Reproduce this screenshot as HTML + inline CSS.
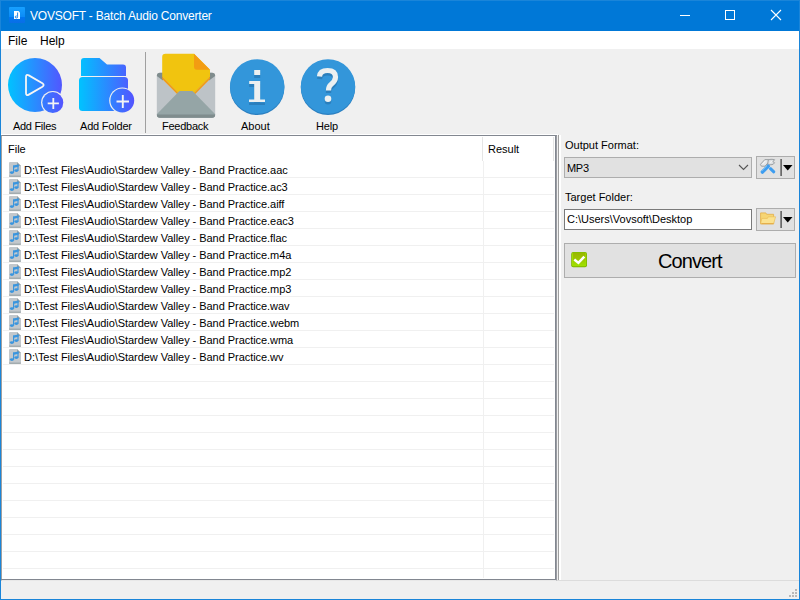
<!DOCTYPE html>
<html><head><meta charset="utf-8">
<style>
*{margin:0;padding:0;box-sizing:border-box}
html,body{width:800px;height:600px;overflow:hidden;background:#f0f0f0}
body{position:relative;font-family:"Liberation Sans",sans-serif;font-size:11px;line-height:12px;color:#000}
.a{position:absolute}
.t{position:absolute;white-space:pre;line-height:12px;font-size:11px}
</style></head><body>
<svg width="0" height="0" style="position:absolute">
<defs>
<linearGradient id="gb" x1="0" y1="0" x2="1" y2="0"><stop offset="0" stop-color="#00c3ff"/><stop offset="1" stop-color="#5552ff"/></linearGradient>
<linearGradient id="gb2" gradientUnits="userSpaceOnUse" x1="8" y1="0" x2="64" y2="0"><stop offset="0" stop-color="#00c3ff"/><stop offset="1" stop-color="#5552ff"/></linearGradient>
<linearGradient id="gf" gradientUnits="userSpaceOnUse" x1="79" y1="0" x2="135" y2="0"><stop offset="0" stop-color="#00c3ff"/><stop offset="1" stop-color="#5552ff"/></linearGradient>

</defs></svg>
<!-- title bar -->
<div class="a" style="left:0;top:0;width:800px;height:31px;background:#0078d7"></div>
<div class="a" style="left:0;top:0;width:800px;height:1px;background:#1a85d9"></div>
<!-- app icon -->
<div class="a" style="left:9px;top:7px;width:16px;height:16px;background:linear-gradient(#17a0ff,#0c8cf7 60%,#0077f0 62%,#0a6ee6);border-radius:1px"></div>
<svg class="a" style="left:13px;top:10px" width="8" height="10" viewBox="0 0 8 10"><path d="M1 1H5.5L7 2.5V9H1Z" fill="#fff"/><path d="M4.6 2.5V6.8A1.2 1 0 1 1 3.8 6" fill="none" stroke="#0a78e6" stroke-width="0.9"/></svg>
<div class="t" style="left:30px;top:10px;font-size:12px;color:#fff;letter-spacing:-0.2px">VOVSOFT - Batch Audio Converter</div>
<!-- caption buttons -->
<div class="a" style="left:680px;top:15px;width:10px;height:1px;background:#fff"></div>
<div class="a" style="left:725px;top:10px;width:10px;height:10px;border:1px solid #fff"></div>
<svg class="a" style="left:770px;top:9px" width="12" height="12" viewBox="0 0 12 12"><path d="M1 1L11 11M11 1L1 11" stroke="#fff" stroke-width="1.1"/></svg>

<!-- menu bar -->
<div class="a" style="left:1px;top:31px;width:798px;height:18px;background:#fff"></div>
<div class="t" style="left:8px;top:35px;font-size:12px">File</div>
<div class="t" style="left:40px;top:35px;font-size:12px">Help</div>

<!-- toolbar -->
<svg class="a" style="left:0;top:49px" width="400" height="86" viewBox="0 49 400 86">
 <!-- add files -->
 <circle cx="35" cy="85" r="27" fill="url(#gb2)"/>
 <path d="M26 77Q26 73.8 28.8 75.4L42.4 83.3Q44.9 85 42.4 86.7L28.8 94.6Q26 96.2 26 93Z" fill="none" stroke="#f6f6f6" stroke-width="1.8" stroke-linejoin="round"/>
 <circle cx="52.8" cy="102.6" r="11.7" fill="#f0f0f0"/>
 <circle cx="52.8" cy="102.6" r="10.5" fill="url(#gb2)"/>
 <path d="M47.7 103.4H58.9M53.3 98V108.9" stroke="#f4f4f4" stroke-width="1.8"/>
 <!-- add folder -->
 <path d="M84 58H99.5L107 64.5H123Q126 64.5 126 67.5V76H81V61Q81 58 84 58Z" fill="url(#gf)"/>
 <rect x="79" y="77" width="49" height="34" rx="3.5" fill="url(#gf)"/>
 <circle cx="122.3" cy="100.5" r="13.1" fill="#f0f0f0"/>
 <circle cx="122.3" cy="100.5" r="11.9" fill="url(#gf)"/>
 <path d="M116.5 101.5H129M122.8 94.9V108" stroke="#f4f4f4" stroke-width="1.9"/>
 <!-- separator -->
 <rect x="145" y="52" width="1" height="81" fill="#a0a0a0"/>
 <!-- feedback -->
 <path d="M160 72.8H212Q215.2 72.8 215.2 76V114.5Q215.2 117.7 212 117.7H160Q156.8 117.7 156.8 114.5V76Q156.8 72.8 160 72.8Z" fill="#bdc3c7"/>
 <path d="M156.8 76Q157 72.8 160 72.8H163V80.5Z" fill="#7f8c8d"/>
 <path d="M215.2 76Q215 72.8 212 72.8H209V80.5Z" fill="#7f8c8d"/>
 <path d="M165.5 53.8H194L210 69.8V76.5L193.7 93.2H178.6L162.2 76.5V57Q162.2 53.8 165.5 53.8Z" fill="#f1c40f"/>
 <path d="M194 53.8L210 69.8H197Q194 69.8 194 66.8Z" fill="#f39c12"/>
 <path d="M162.2 76.5L178.6 93.2H193.7L210 76.5V79L193.7 95.5H178.6L162.2 79Z" fill="#f39c12"/>
 <path d="M156.8 76L186 103L215.2 76" fill="none"/>
 <path d="M157 114L179.5 91H192.5L215 114V114.5Q215 117.7 212 117.7H160Q157 117.7 157 114.5Z" fill="#95a5a6"/>
 <path d="M156.8 114.6H215.2V114.6Q215.2 117.8 212 117.8H160Q156.8 117.8 156.8 114.6Z" fill="#7f8c8d"/>
 <!-- about -->
 <circle cx="257.2" cy="87.8" r="27.2" fill="#2a7fc0"/>
 <circle cx="257.2" cy="86.5" r="27.2" fill="#3396da"/>
 <rect x="254.2" y="73" width="6" height="5" fill="#2a7fbd"/>
 <rect x="254.2" y="70" width="6" height="5" fill="#ecf0f1"/>
 <path d="M249.2 84H260.2V102.6H265V105H249V102.6H254.2V87H249.2Z" fill="#2a7fbd"/>
 <path d="M249.2 81H260.2V99.6H265V102H249V99.6H254.2V84H249.2Z" fill="#ecf0f1"/>
 <!-- help -->
 <circle cx="328" cy="87.8" r="27.2" fill="#2a7fc0"/>
 <circle cx="328" cy="86.5" r="27.2" fill="#3396da"/>
 <path d="M319.5 79Q320 73 327.5 73Q335.5 73 335.5 79.5Q335.5 83.5 331 87Q328.5 89 328.5 93" fill="none" stroke="#2a7fbd" stroke-width="5.2" stroke-linecap="butt"/>
 <circle cx="328" cy="101.3" r="3.3" fill="#2a7fbd"/>
 <path d="M319.5 76.5Q320 70.5 327.5 70.5Q335.5 70.5 335.5 77Q335.5 81 331 84.5Q328.5 86.5 328.5 90.5" fill="none" stroke="#ecf0f1" stroke-width="5.2" stroke-linecap="butt"/>
 <circle cx="328" cy="98.8" r="3.3" fill="#ecf0f1"/>
</svg>
<div class="t" style="left:13px;top:120px;letter-spacing:-0.3px">Add Files</div>
<div class="t" style="left:80px;top:120px;letter-spacing:-0.2px">Add Folder</div>
<div class="t" style="left:162px;top:120px;letter-spacing:-0.25px">Feedback</div>
<div class="t" style="left:241px;top:120px">About</div>
<div class="t" style="left:316px;top:120px;letter-spacing:-0.2px">Help</div>

<!-- highlight under toolbar -->
<div class="a" style="left:1px;top:134px;width:557px;height:1px;background:#fff"></div>

<!-- listview -->
<div class="a" style="left:1px;top:135px;width:556px;height:446px;background:#fff;border-top:1px solid #828790;border-left:1px solid #a0a0a0;border-right:1px solid #9a9ca2;border-bottom:1px solid #e8e8e8"></div>
<div class="a" style="left:555px;top:135px;width:1px;height:445px;background:#828790"></div>
<div class="a" style="left:1px;top:579px;width:555px;height:1px;background:#828790"></div>
<div class="t" style="left:8px;top:143px">File</div>
<div class="t" style="left:488px;top:143px">Result</div>
<div class="a" style="left:482px;top:137px;width:1px;height:24px;background:#e5e5e5"></div>
<div class="a" style="left:553px;top:137px;width:1px;height:24px;background:#e5e5e5"></div>
<div class="a" style="left:3px;top:177px;width:551px;height:1px;background:#f0f0f0"></div>
<div class="a" style="left:3px;top:194px;width:551px;height:1px;background:#f0f0f0"></div>
<div class="a" style="left:3px;top:211px;width:551px;height:1px;background:#f0f0f0"></div>
<div class="a" style="left:3px;top:228px;width:551px;height:1px;background:#f0f0f0"></div>
<div class="a" style="left:3px;top:245px;width:551px;height:1px;background:#f0f0f0"></div>
<div class="a" style="left:3px;top:262px;width:551px;height:1px;background:#f0f0f0"></div>
<div class="a" style="left:3px;top:279px;width:551px;height:1px;background:#f0f0f0"></div>
<div class="a" style="left:3px;top:296px;width:551px;height:1px;background:#f0f0f0"></div>
<div class="a" style="left:3px;top:313px;width:551px;height:1px;background:#f0f0f0"></div>
<div class="a" style="left:3px;top:330px;width:551px;height:1px;background:#f0f0f0"></div>
<div class="a" style="left:3px;top:347px;width:551px;height:1px;background:#f0f0f0"></div>
<div class="a" style="left:3px;top:364px;width:551px;height:1px;background:#f0f0f0"></div>
<div class="a" style="left:3px;top:381px;width:551px;height:1px;background:#f0f0f0"></div>
<div class="a" style="left:3px;top:398px;width:551px;height:1px;background:#f0f0f0"></div>
<div class="a" style="left:3px;top:415px;width:551px;height:1px;background:#f0f0f0"></div>
<div class="a" style="left:3px;top:432px;width:551px;height:1px;background:#f0f0f0"></div>
<div class="a" style="left:3px;top:449px;width:551px;height:1px;background:#f0f0f0"></div>
<div class="a" style="left:3px;top:466px;width:551px;height:1px;background:#f0f0f0"></div>
<div class="a" style="left:3px;top:483px;width:551px;height:1px;background:#f0f0f0"></div>
<div class="a" style="left:3px;top:500px;width:551px;height:1px;background:#f0f0f0"></div>
<div class="a" style="left:3px;top:517px;width:551px;height:1px;background:#f0f0f0"></div>
<div class="a" style="left:3px;top:534px;width:551px;height:1px;background:#f0f0f0"></div>
<div class="a" style="left:3px;top:551px;width:551px;height:1px;background:#f0f0f0"></div>
<div class="a" style="left:3px;top:568px;width:551px;height:1px;background:#f0f0f0"></div>
<div class="a" style="left:483px;top:161px;width:1px;height:417px;background:#f0f0f0"></div>
<svg class="a" style="left:9px;top:162px" width="12" height="15" viewBox="0 0 12 15"><path d="M1 0H8L12 4V14Q12 15 11 15H1Q0 15 0 14V1Q0 0 1 0Z" fill="#c3c8cc"/><path d="M0 13.5H12V14Q12 15 11 15H1Q0 15 0 14Z" fill="#a3acaf"/><path d="M8 0L12 4H8Z" fill="#98a2a6"/><path d="M4 3.4L9.6 2.4V4.8L5.2 5.7Z" fill="#3a95de"/><rect x="4" y="3.6" width="1.2" height="7" fill="#3a95de"/><rect x="8.4" y="2.6" width="1.2" height="6" fill="#3a95de"/><ellipse cx="2.9" cy="10.6" rx="2" ry="1.3" fill="#3a95de"/><ellipse cx="7.4" cy="8.6" rx="2" ry="1.3" fill="#3a95de"/></svg>
<div class="t" style="left:24px;top:164px;letter-spacing:-0.05px">D:\Test Files\Audio\Stardew Valley - Band Practice.aac</div>
<svg class="a" style="left:9px;top:179px" width="12" height="15" viewBox="0 0 12 15"><path d="M1 0H8L12 4V14Q12 15 11 15H1Q0 15 0 14V1Q0 0 1 0Z" fill="#c3c8cc"/><path d="M0 13.5H12V14Q12 15 11 15H1Q0 15 0 14Z" fill="#a3acaf"/><path d="M8 0L12 4H8Z" fill="#98a2a6"/><path d="M4 3.4L9.6 2.4V4.8L5.2 5.7Z" fill="#3a95de"/><rect x="4" y="3.6" width="1.2" height="7" fill="#3a95de"/><rect x="8.4" y="2.6" width="1.2" height="6" fill="#3a95de"/><ellipse cx="2.9" cy="10.6" rx="2" ry="1.3" fill="#3a95de"/><ellipse cx="7.4" cy="8.6" rx="2" ry="1.3" fill="#3a95de"/></svg>
<div class="t" style="left:24px;top:181px;letter-spacing:-0.05px">D:\Test Files\Audio\Stardew Valley - Band Practice.ac3</div>
<svg class="a" style="left:9px;top:196px" width="12" height="15" viewBox="0 0 12 15"><path d="M1 0H8L12 4V14Q12 15 11 15H1Q0 15 0 14V1Q0 0 1 0Z" fill="#c3c8cc"/><path d="M0 13.5H12V14Q12 15 11 15H1Q0 15 0 14Z" fill="#a3acaf"/><path d="M8 0L12 4H8Z" fill="#98a2a6"/><path d="M4 3.4L9.6 2.4V4.8L5.2 5.7Z" fill="#3a95de"/><rect x="4" y="3.6" width="1.2" height="7" fill="#3a95de"/><rect x="8.4" y="2.6" width="1.2" height="6" fill="#3a95de"/><ellipse cx="2.9" cy="10.6" rx="2" ry="1.3" fill="#3a95de"/><ellipse cx="7.4" cy="8.6" rx="2" ry="1.3" fill="#3a95de"/></svg>
<div class="t" style="left:24px;top:198px;letter-spacing:-0.05px">D:\Test Files\Audio\Stardew Valley - Band Practice.aiff</div>
<svg class="a" style="left:9px;top:213px" width="12" height="15" viewBox="0 0 12 15"><path d="M1 0H8L12 4V14Q12 15 11 15H1Q0 15 0 14V1Q0 0 1 0Z" fill="#c3c8cc"/><path d="M0 13.5H12V14Q12 15 11 15H1Q0 15 0 14Z" fill="#a3acaf"/><path d="M8 0L12 4H8Z" fill="#98a2a6"/><path d="M4 3.4L9.6 2.4V4.8L5.2 5.7Z" fill="#3a95de"/><rect x="4" y="3.6" width="1.2" height="7" fill="#3a95de"/><rect x="8.4" y="2.6" width="1.2" height="6" fill="#3a95de"/><ellipse cx="2.9" cy="10.6" rx="2" ry="1.3" fill="#3a95de"/><ellipse cx="7.4" cy="8.6" rx="2" ry="1.3" fill="#3a95de"/></svg>
<div class="t" style="left:24px;top:215px;letter-spacing:-0.05px">D:\Test Files\Audio\Stardew Valley - Band Practice.eac3</div>
<svg class="a" style="left:9px;top:230px" width="12" height="15" viewBox="0 0 12 15"><path d="M1 0H8L12 4V14Q12 15 11 15H1Q0 15 0 14V1Q0 0 1 0Z" fill="#c3c8cc"/><path d="M0 13.5H12V14Q12 15 11 15H1Q0 15 0 14Z" fill="#a3acaf"/><path d="M8 0L12 4H8Z" fill="#98a2a6"/><path d="M4 3.4L9.6 2.4V4.8L5.2 5.7Z" fill="#3a95de"/><rect x="4" y="3.6" width="1.2" height="7" fill="#3a95de"/><rect x="8.4" y="2.6" width="1.2" height="6" fill="#3a95de"/><ellipse cx="2.9" cy="10.6" rx="2" ry="1.3" fill="#3a95de"/><ellipse cx="7.4" cy="8.6" rx="2" ry="1.3" fill="#3a95de"/></svg>
<div class="t" style="left:24px;top:232px;letter-spacing:-0.05px">D:\Test Files\Audio\Stardew Valley - Band Practice.flac</div>
<svg class="a" style="left:9px;top:247px" width="12" height="15" viewBox="0 0 12 15"><path d="M1 0H8L12 4V14Q12 15 11 15H1Q0 15 0 14V1Q0 0 1 0Z" fill="#c3c8cc"/><path d="M0 13.5H12V14Q12 15 11 15H1Q0 15 0 14Z" fill="#a3acaf"/><path d="M8 0L12 4H8Z" fill="#98a2a6"/><path d="M4 3.4L9.6 2.4V4.8L5.2 5.7Z" fill="#3a95de"/><rect x="4" y="3.6" width="1.2" height="7" fill="#3a95de"/><rect x="8.4" y="2.6" width="1.2" height="6" fill="#3a95de"/><ellipse cx="2.9" cy="10.6" rx="2" ry="1.3" fill="#3a95de"/><ellipse cx="7.4" cy="8.6" rx="2" ry="1.3" fill="#3a95de"/></svg>
<div class="t" style="left:24px;top:249px;letter-spacing:-0.05px">D:\Test Files\Audio\Stardew Valley - Band Practice.m4a</div>
<svg class="a" style="left:9px;top:264px" width="12" height="15" viewBox="0 0 12 15"><path d="M1 0H8L12 4V14Q12 15 11 15H1Q0 15 0 14V1Q0 0 1 0Z" fill="#c3c8cc"/><path d="M0 13.5H12V14Q12 15 11 15H1Q0 15 0 14Z" fill="#a3acaf"/><path d="M8 0L12 4H8Z" fill="#98a2a6"/><path d="M4 3.4L9.6 2.4V4.8L5.2 5.7Z" fill="#3a95de"/><rect x="4" y="3.6" width="1.2" height="7" fill="#3a95de"/><rect x="8.4" y="2.6" width="1.2" height="6" fill="#3a95de"/><ellipse cx="2.9" cy="10.6" rx="2" ry="1.3" fill="#3a95de"/><ellipse cx="7.4" cy="8.6" rx="2" ry="1.3" fill="#3a95de"/></svg>
<div class="t" style="left:24px;top:266px;letter-spacing:-0.05px">D:\Test Files\Audio\Stardew Valley - Band Practice.mp2</div>
<svg class="a" style="left:9px;top:281px" width="12" height="15" viewBox="0 0 12 15"><path d="M1 0H8L12 4V14Q12 15 11 15H1Q0 15 0 14V1Q0 0 1 0Z" fill="#c3c8cc"/><path d="M0 13.5H12V14Q12 15 11 15H1Q0 15 0 14Z" fill="#a3acaf"/><path d="M8 0L12 4H8Z" fill="#98a2a6"/><path d="M4 3.4L9.6 2.4V4.8L5.2 5.7Z" fill="#3a95de"/><rect x="4" y="3.6" width="1.2" height="7" fill="#3a95de"/><rect x="8.4" y="2.6" width="1.2" height="6" fill="#3a95de"/><ellipse cx="2.9" cy="10.6" rx="2" ry="1.3" fill="#3a95de"/><ellipse cx="7.4" cy="8.6" rx="2" ry="1.3" fill="#3a95de"/></svg>
<div class="t" style="left:24px;top:283px;letter-spacing:-0.05px">D:\Test Files\Audio\Stardew Valley - Band Practice.mp3</div>
<svg class="a" style="left:9px;top:298px" width="12" height="15" viewBox="0 0 12 15"><path d="M1 0H8L12 4V14Q12 15 11 15H1Q0 15 0 14V1Q0 0 1 0Z" fill="#c3c8cc"/><path d="M0 13.5H12V14Q12 15 11 15H1Q0 15 0 14Z" fill="#a3acaf"/><path d="M8 0L12 4H8Z" fill="#98a2a6"/><path d="M4 3.4L9.6 2.4V4.8L5.2 5.7Z" fill="#3a95de"/><rect x="4" y="3.6" width="1.2" height="7" fill="#3a95de"/><rect x="8.4" y="2.6" width="1.2" height="6" fill="#3a95de"/><ellipse cx="2.9" cy="10.6" rx="2" ry="1.3" fill="#3a95de"/><ellipse cx="7.4" cy="8.6" rx="2" ry="1.3" fill="#3a95de"/></svg>
<div class="t" style="left:24px;top:300px;letter-spacing:-0.05px">D:\Test Files\Audio\Stardew Valley - Band Practice.wav</div>
<svg class="a" style="left:9px;top:315px" width="12" height="15" viewBox="0 0 12 15"><path d="M1 0H8L12 4V14Q12 15 11 15H1Q0 15 0 14V1Q0 0 1 0Z" fill="#c3c8cc"/><path d="M0 13.5H12V14Q12 15 11 15H1Q0 15 0 14Z" fill="#a3acaf"/><path d="M8 0L12 4H8Z" fill="#98a2a6"/><path d="M4 3.4L9.6 2.4V4.8L5.2 5.7Z" fill="#3a95de"/><rect x="4" y="3.6" width="1.2" height="7" fill="#3a95de"/><rect x="8.4" y="2.6" width="1.2" height="6" fill="#3a95de"/><ellipse cx="2.9" cy="10.6" rx="2" ry="1.3" fill="#3a95de"/><ellipse cx="7.4" cy="8.6" rx="2" ry="1.3" fill="#3a95de"/></svg>
<div class="t" style="left:24px;top:317px;letter-spacing:-0.05px">D:\Test Files\Audio\Stardew Valley - Band Practice.webm</div>
<svg class="a" style="left:9px;top:332px" width="12" height="15" viewBox="0 0 12 15"><path d="M1 0H8L12 4V14Q12 15 11 15H1Q0 15 0 14V1Q0 0 1 0Z" fill="#c3c8cc"/><path d="M0 13.5H12V14Q12 15 11 15H1Q0 15 0 14Z" fill="#a3acaf"/><path d="M8 0L12 4H8Z" fill="#98a2a6"/><path d="M4 3.4L9.6 2.4V4.8L5.2 5.7Z" fill="#3a95de"/><rect x="4" y="3.6" width="1.2" height="7" fill="#3a95de"/><rect x="8.4" y="2.6" width="1.2" height="6" fill="#3a95de"/><ellipse cx="2.9" cy="10.6" rx="2" ry="1.3" fill="#3a95de"/><ellipse cx="7.4" cy="8.6" rx="2" ry="1.3" fill="#3a95de"/></svg>
<div class="t" style="left:24px;top:334px;letter-spacing:-0.05px">D:\Test Files\Audio\Stardew Valley - Band Practice.wma</div>
<svg class="a" style="left:9px;top:349px" width="12" height="15" viewBox="0 0 12 15"><path d="M1 0H8L12 4V14Q12 15 11 15H1Q0 15 0 14V1Q0 0 1 0Z" fill="#c3c8cc"/><path d="M0 13.5H12V14Q12 15 11 15H1Q0 15 0 14Z" fill="#a3acaf"/><path d="M8 0L12 4H8Z" fill="#98a2a6"/><path d="M4 3.4L9.6 2.4V4.8L5.2 5.7Z" fill="#3a95de"/><rect x="4" y="3.6" width="1.2" height="7" fill="#3a95de"/><rect x="8.4" y="2.6" width="1.2" height="6" fill="#3a95de"/><ellipse cx="2.9" cy="10.6" rx="2" ry="1.3" fill="#3a95de"/><ellipse cx="7.4" cy="8.6" rx="2" ry="1.3" fill="#3a95de"/></svg>
<div class="t" style="left:24px;top:351px;letter-spacing:-0.05px">D:\Test Files\Audio\Stardew Valley - Band Practice.wv</div>

<!-- splitter -->
<div class="a" style="left:557px;top:135px;width:1px;height:446px;background:#f0f0f0"></div>
<div class="a" style="left:558px;top:135px;width:1px;height:445px;background:#a0a0a0"></div>
<div class="a" style="left:559px;top:135px;width:2px;height:445px;background:#fff"></div>
<div class="a" style="left:557px;top:580px;width:242px;height:1px;background:#dcdcdc"></div>

<!-- right panel -->
<div class="t" style="left:565px;top:139px">Output Format:</div>
<div class="a" style="left:564px;top:157px;width:188px;height:21px;background:#e1e1e1;border:1px solid #adadad"></div>
<div class="t" style="left:567px;top:162px;letter-spacing:-0.3px">MP3</div>
<svg class="a" style="left:738px;top:164px" width="11" height="7" viewBox="0 0 11 7"><path d="M1 1L5.5 5.5L10 1" fill="none" stroke="#555" stroke-width="1.1"/></svg>
<div class="a" style="left:756px;top:156px;width:39px;height:23px;background:#e1e1e1;border:1px solid #adadad"></div>
<div class="a" style="left:780px;top:159px;width:1px;height:17px;background:#8a8a8a"></div><div class="a" style="left:781px;top:159px;width:1px;height:17px;background:#6a6a6a"></div>
<svg class="a" style="left:783px;top:165px" width="10" height="6" viewBox="0 0 10 6"><path d="M0 0H9.5L4.75 5.5Z" fill="#000"/></svg>
<svg class="a" style="left:757px;top:156px" width="22" height="22" viewBox="0 0 22 22">
 <path d="M3.4 8.4L7.8 3.6H11.8L11.4 6.4L8 10.2H4.4Z" fill="#e4e6e8" stroke="#94989c" stroke-width="0.9" stroke-linejoin="round"/>
 <path d="M11.2 4Q12.8 3.2 15 3.3L17.6 3.7L15.9 5.7L17.6 6.7Q16.6 8.8 14 8.8L12.2 8.7L10.6 9.7Z" fill="#dcdfe2" stroke="#94989c" stroke-width="0.9" stroke-linejoin="round"/>
 <path d="M5.6 8L8.6 4.8M12.8 6.5L15.2 5.4" fill="none" stroke="#fbfbfb" stroke-width="0.9"/>
 <path d="M13.2 12.3L16.8 15.8" stroke="#3d9df0" stroke-width="3" stroke-linecap="round"/>
 <path d="M11.6 12.6L13.6 10.6" stroke="#e1e1e1" stroke-width="1"/>
 <path d="M5.4 16.1L11.2 10.2" stroke="#3d9df0" stroke-width="3.5" stroke-linecap="round"/>
 <path d="M4.8 15.2L9.8 10" stroke="#6fbdf6" stroke-width="0.9"/>
</svg>

<div class="t" style="left:565px;top:191px">Target Folder:</div>
<div class="a" style="left:564px;top:209px;width:188px;height:21px;background:#fff;border:1px solid #7a7a7a"></div>
<div class="t" style="left:567px;top:213px">C:\Users\Vovsoft\Desktop</div>
<div class="a" style="left:756px;top:208px;width:39px;height:23px;background:#e1e1e1;border:1px solid #adadad"></div>
<div class="a" style="left:780px;top:211px;width:1px;height:17px;background:#8a8a8a"></div><div class="a" style="left:781px;top:211px;width:1px;height:17px;background:#6a6a6a"></div>
<svg class="a" style="left:783px;top:217px" width="10" height="6" viewBox="0 0 10 6"><path d="M0 0H9.5L4.75 5.5Z" fill="#000"/></svg>
<svg class="a" style="left:760px;top:212px" width="17" height="13" viewBox="0 0 17 13">
 <path d="M0.6 0.9H5.8L6.6 2.3H13.6V11.8H0.6Z" fill="#f6d574" stroke="#e3ad45" stroke-width="0.8"/>
 <path d="M1.8 6.4H7.4L8.3 4.8H15.6L13.6 11.8H0.6Z" fill="#fbe28f" stroke="#e8b850" stroke-width="0.6"/>
 <path d="M1.5 11.6H13.5" stroke="#e3a842" stroke-width="0.9"/>
</svg>

<div class="a" style="left:564px;top:243px;width:232px;height:35px;background:#e1e1e1;border:1px solid #adadad"></div>
<svg class="a" style="left:571px;top:252px" width="16" height="16" viewBox="0 0 16 16">
 <defs><linearGradient id="gc" x1="0" y1="0" x2="0" y2="1"><stop offset="0" stop-color="#9ab600"/><stop offset="0.45" stop-color="#9cc400"/><stop offset="1" stop-color="#9ee000"/></linearGradient></defs>
 <rect x="0.2" y="0" width="15.8" height="15.3" rx="2" fill="#7db400"/>
 <rect x="1" y="0.7" width="14.2" height="13.6" rx="1.2" fill="#a2e000"/>
 <rect x="2" y="1" width="12.4" height="12.6" fill="url(#gc)"/>
 <path d="M3.3 7.5L7.4 10.9L13.3 4.6" fill="none" stroke="#fff" stroke-width="2.5" stroke-linejoin="miter"/>
</svg>
<div class="t" style="left:658px;top:251px;font-size:20px;line-height:20px;letter-spacing:-0.9px">Convert</div>

<!-- status grip -->
<div class="a" style="left:795px;top:589px;width:2px;height:2px;background:#b8b8b8"></div>
<div class="a" style="left:792px;top:592px;width:2px;height:2px;background:#b8b8b8"></div>
<div class="a" style="left:795px;top:592px;width:2px;height:2px;background:#b8b8b8"></div>
<div class="a" style="left:789px;top:595px;width:2px;height:2px;background:#b8b8b8"></div>
<div class="a" style="left:792px;top:595px;width:2px;height:2px;background:#b8b8b8"></div>
<div class="a" style="left:795px;top:595px;width:2px;height:2px;background:#b8b8b8"></div>

<!-- window borders -->
<div class="a" style="left:0;top:0;width:1px;height:600px;background:#1a85d9"></div>
<div class="a" style="left:799px;top:0;width:1px;height:600px;background:#1a85d9"></div>
<div class="a" style="left:0;top:599px;width:800px;height:1px;background:#1a85d9"></div>
</body></html>
